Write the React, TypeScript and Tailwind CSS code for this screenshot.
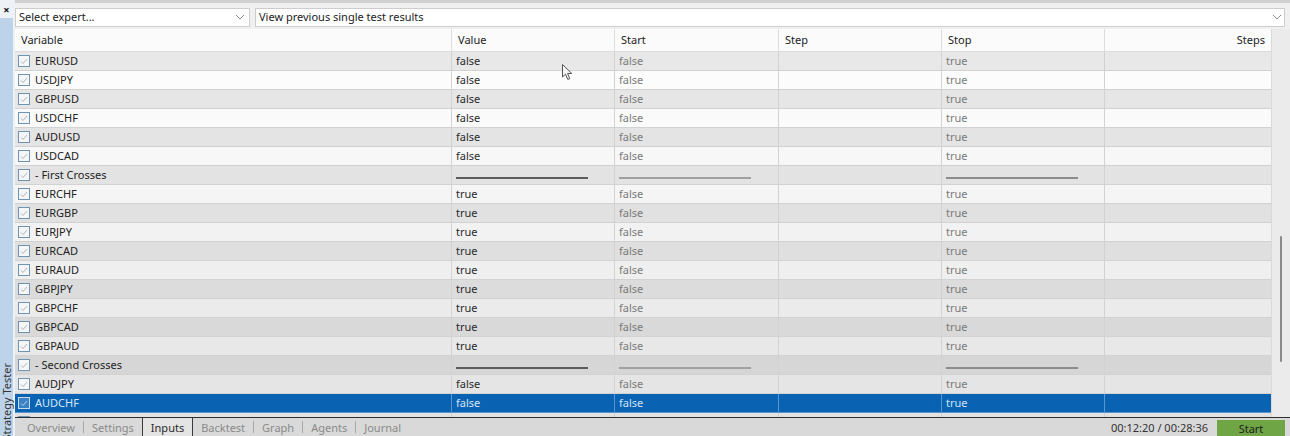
import React from "react";

type Row = {
  name: string;
  value?: string;
  sep?: boolean;
  bg: string;
  selected?: boolean;
};

const rows: Row[] = [
  { name: "EURUSD", value: "false", bg: "bg-[#e8e8e8]" },
  { name: "USDJPY", value: "false", bg: "bg-[#fcfcfc]" },
  { name: "GBPUSD", value: "false", bg: "bg-[#e6e6e6]" },
  { name: "USDCHF", value: "false", bg: "bg-[#fafafa]" },
  { name: "AUDUSD", value: "false", bg: "bg-[#e4e4e4]" },
  { name: "USDCAD", value: "false", bg: "bg-[#f7f7f7]" },
  { name: "- First Crosses", sep: true, bg: "bg-[#e3e3e3]" },
  { name: "EURCHF", value: "true", bg: "bg-[#f5f5f5]" },
  { name: "EURGBP", value: "true", bg: "bg-[#e1e1e1]" },
  { name: "EURJPY", value: "true", bg: "bg-[#f2f2f2]" },
  { name: "EURCAD", value: "true", bg: "bg-[#dfdfdf]" },
  { name: "EURAUD", value: "true", bg: "bg-[#efefef]" },
  { name: "GBPJPY", value: "true", bg: "bg-[#dcdcdc]" },
  { name: "GBPCHF", value: "true", bg: "bg-[#ebebeb]" },
  { name: "GBPCAD", value: "true", bg: "bg-[#d9d9d9]" },
  { name: "GBPAUD", value: "true", bg: "bg-[#e8e8e8]" },
  { name: "- Second Crosses", sep: true, bg: "bg-[#d6d6d6]" },
  { name: "AUDJPY", value: "false", bg: "bg-[#e5e5e5]" },
  { name: "AUDCHF", value: "false", bg: "bg-[#0a62b2]", selected: true },
  { name: "AUDCAD", value: "false", bg: "bg-[#e2e2e2]" },
];

const cols = "grid grid-cols-[436px_163px_164px_163px_163px_1fr]";

const Chevron = () => (
  <svg width="10" height="6" viewBox="0 0 10 6" className="shrink-0">
    <path d="M1 1 L5 5 L9 1" fill="none" stroke="#8a8a8a" strokeWidth="1" />
  </svg>
);

const Check = ({ selected }: { selected?: boolean }) => (
  <div
    className={`w-[12px] h-[12px] border flex items-center justify-center shrink-0 ${
      selected ? "border-[#c9dcef] bg-[#3a82c6]" : "border-[#6f93b5] bg-[#f4f6f8]"
    }`}
  >
    <svg width="8" height="7" viewBox="0 0 8 7">
      <path d="M1 3.5 L3 5.5 L7 1" fill="none" stroke={selected ? "#b9d2ea" : "#b4b4b4"} strokeWidth="1" />
    </svg>
  </div>
);

const tabs = ["Overview", "Settings", "Inputs", "Backtest", "Graph", "Agents", "Journal"];

export default function App() {
  return (
    <div
      className="w-[1290px] h-[436px] overflow-hidden flex bg-[#f0f0f0] text-[11px] text-[#222] relative"
      style={{ fontFamily: '"Noto Sans", "Liberation Sans", sans-serif' }}
    >
      {/* left docked strip */}
      <div className="w-[15px] flex flex-col shrink-0 bg-[#eef2f6]">
        <div className="h-[18px] flex items-center justify-center text-[11px] font-bold leading-none text-[#111] pr-[2px]">
          ×
        </div>
        <div className="flex-1 w-[13px] bg-[#bdd3ea] flex flex-col justify-end items-center">
          <div className="[writing-mode:vertical-rl] rotate-180 text-[11px] leading-[13px] text-[#333] whitespace-nowrap -mb-[4px]">
            Strategy Tester
          </div>
        </div>
      </div>

      <div className="flex-1 flex flex-col min-w-0">
        {/* toolbar */}
        <div className="h-[29px] shrink-0 border-t-[3px] border-[#cfcfcf] bg-[#f0f0f0] flex items-center gap-[5px] pr-[5px] pt-[2px]">
          <div className="w-[235px] h-[19px] bg-white border border-[#cdcdcd] flex items-center justify-between pl-[3px] pr-[4px]">
            <span>Select expert...</span>
            <Chevron />
          </div>
          <div className="flex-1 h-[19px] bg-white border border-[#cdcdcd] flex items-center justify-between pl-[3px] pr-[2px]">
            <span>View previous single test results</span>
            <Chevron />
          </div>
        </div>

        {/* table + scrollbar */}
        <div className="h-[388px] shrink-0 flex overflow-hidden">
          <div className="flex-1 flex flex-col overflow-hidden min-w-0">
            <div className={`${cols} h-[23px] shrink-0 bg-[#fbfbfb] border-b border-[#dcdcdc]`}>
              <div className="pl-[6px] flex items-center">Variable</div>
              <div className="pl-[6px] flex items-center border-l border-[#dedede]">Value</div>
              <div className="pl-[6px] flex items-center border-l border-[#dedede]">Start</div>
              <div className="pl-[6px] flex items-center border-l border-[#dedede]">Step</div>
              <div className="pl-[6px] flex items-center border-l border-[#dedede]">Stop</div>
              <div className="pr-[6px] flex items-center justify-end border-l border-[#dedede]">Steps</div>
            </div>
            {rows.map((r) => {
              const line = r.selected ? "border-[#5a95cf]" : "border-[#d2d2d2]";
              const dim = r.selected ? "text-[#cfe2f6]" : "text-[#7a7a7a]";
              return (
                <div key={r.name} className={`${cols} h-[19px] shrink-0 border-b ${line} ${r.bg}`}>
                  <div className={`flex items-center gap-[5px] pl-[3px] ${r.selected ? "text-[#d6e7f8]" : ""}`}>
                    <Check selected={r.selected} />
                    <span>{r.name}</span>
                  </div>
                  <div className={`flex items-center pl-[4px] border-l ${line} ${r.selected ? "text-[#d6e7f8]" : "text-[#2a2a2a]"}`}>
                    {r.sep ? <div className="w-[132px] h-[2px] bg-[#5c5c5c] mt-[5px]" /> : r.value}
                  </div>
                  <div className={`flex items-center pl-[4px] border-l ${line} ${dim}`}>
                    {r.sep ? <div className="w-[132px] h-[2px] bg-[#a0a0a0] mt-[5px]" /> : "false"}
                  </div>
                  <div className={`border-l ${line}`} />
                  <div className={`flex items-center pl-[4px] border-l ${line} ${dim}`}>
                    {r.sep ? <div className="w-[132px] h-[2px] bg-[#8c8c8c] mt-[5px]" /> : "true"}
                  </div>
                  <div className={`border-l ${line}`} />
                </div>
              );
            })}
          </div>
          <div className="w-[19px] shrink-0 bg-[#ebebeb] border-l border-[#dadada] flex flex-col items-center">
            <div className="h-[207px] shrink-0" />
            <div className="w-[2px] h-[126px] shrink-0 bg-[#8a8a8a] rounded-full" />
          </div>
        </div>

        {/* tab bar */}
        <div className="flex-1 bg-[#d9d9d9] border-t border-[#2e2e2e] flex items-stretch leading-none">
          <div className="flex items-stretch pl-[4px]">
            {tabs.map((t, i) => {
              const active = t === "Inputs";
              const next = tabs[i + 1];
              return (
                <div key={t} className="flex items-center">
                  <div
                    className={`h-full flex items-center px-[8px] ${
                      active ? "bg-[#e4e4e4] text-[#2a2a2a] border-x border-[#3a3a3a]" : "text-[#8a8a8a]"
                    }`}
                  >
                    {t}
                  </div>
                  {!active && next && next !== "Inputs" && <div className="w-px h-[12px] bg-[#a8a8a8]" />}
                </div>
              );
            })}
          </div>
          <div className="flex-1" />
          <div className="flex items-center text-[#333] pr-[9px]">00:12:20 / 00:28:36</div>
          <div className="w-[68px] mr-[5px] mt-[2px] bg-[#6fa545] flex items-center justify-center text-[#1e1e1e]">
            Start
          </div>
        </div>
      </div>

      {/* mouse pointer */}
      <svg className="absolute left-[562px] top-[64px]" width="11" height="17" viewBox="0 0 11 17">
        <path d="M0.5 0.5 L0.5 13 L3.5 10.2 L5.8 15.5 L7.8 14.6 L5.6 9.5 L9.8 9.5 Z" fill="#f4f4f4" stroke="#555" strokeWidth="1" />
      </svg>
    </div>
  );
}
